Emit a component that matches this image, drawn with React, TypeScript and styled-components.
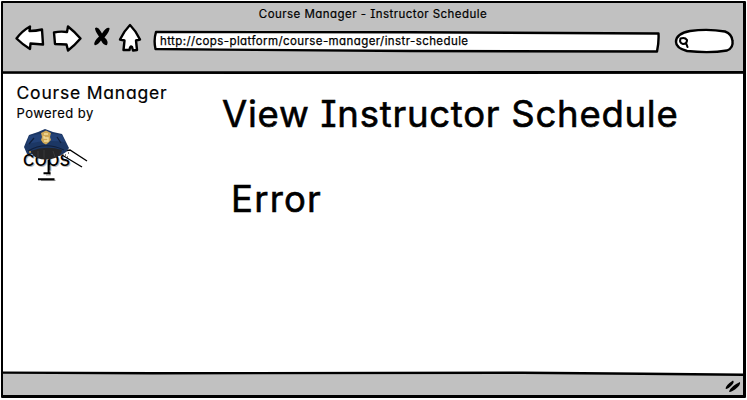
import React from 'react';
import styled, { createGlobalStyle } from 'styled-components';

const GlobalStyle = createGlobalStyle`
  * { box-sizing: border-box; }
  body { margin: 0; background: #fff; }
`;

const Browser = styled.div`
  display: flex;
  flex-direction: column;
  width: 747px;
  height: 400px;
  padding: 1px 1px 2px 1px;
  overflow: hidden;
  background: #fff;
  color: #000;
  font-family: Inter, sans-serif;
  font-feature-settings: 'cv08', 'cv11', 'calt' 0;
`;

const Frame = styled.div`
  flex: 1;
  display: flex;
  flex-direction: column;
  border: 3px solid #000;
  border-top-width: 2px;
  border-left-width: 2.5px;
  border-radius: 1px;
`;

const Header = styled.header`
  height: 68px;
  flex: none;
  background: #c1c1c1;
`;

const WindowTitle = styled.div`
  height: 21px;
  padding-top: 4px;
  text-align: center;
  font-size: 11.5px;
  line-height: 15px;
  white-space: nowrap;
  letter-spacing: 0.46px;
  -webkit-text-stroke: 0.2px #000;
`;

const Toolbar = styled.div`
  display: flex;
  align-items: flex-start;
  padding-left: 9px;
`;

const Nav = styled.svg`
  display: block;
  flex: none;
  width: 134px;
  height: 32px;
  margin-top: -2px;
`;

const Address = styled.div`
  position: relative;
  flex: none;
  width: 510px;
  height: 26px;
  margin: 4px 0 0 5px;
  padding: 6px 0 0 9px;
  font-size: 11.5px;
  line-height: 15px;
  white-space: nowrap;
`;

const Outline = styled.svg`
  position: absolute;
  inset: 0;
  width: 100%;
  height: 100%;
`;

const AddressText = styled.span`
  position: relative;
  letter-spacing: 0.41px;
  -webkit-text-stroke: 0.25px #000;
`;

const Search = styled.svg`
  display: block;
  flex: none;
  width: 62px;
  height: 28px;
  margin: 3px 0 0 12px;
`;

const Rule = styled.svg<{ $height: number }>`
  display: block;
  flex: none;
  width: 100%;
  height: ${(p) => p.$height}px;
`;

const Body = styled.main`
  flex: 1;
  min-height: 0;
  display: flex;
`;

const Sidebar = styled.aside`
  width: 206px;
  padding: 8px 0 0 13.5px;
  white-space: nowrap;
`;

const Brand = styled.div`
  font-size: 17.5px;
  line-height: 22px;
  letter-spacing: 0.8px;
  -webkit-text-stroke: 0.2px #000;
`;

const Powered = styled.div`
  font-size: 13px;
  line-height: 18px;
  letter-spacing: 0.45px;
  -webkit-text-stroke: 0.15px #000;
`;

const Logo = styled.svg`
  display: block;
  width: 80px;
  height: 62px;
  margin-top: 3px;
  margin-left: -1px;
`;

const Content = styled.section`
  flex: 1;
  padding: 18px 0 0 13px;
  white-space: nowrap;
`;

const Heading = styled.h1`
  margin: 0;
  font-size: 36.5px;
  line-height: 44px;
  font-weight: 400;
  letter-spacing: 0.75px;
  -webkit-text-stroke: 0.6px #000;
`;

const Message = styled(Heading)`
  margin: 41px 0 0 9px;
  letter-spacing: 1.2px;
`;

const Footer = styled.footer`
  height: 19px;
  flex: none;
  display: flex;
  justify-content: flex-end;
  background: #c1c1c1;
`;

const Grip = styled.svg`
  width: 22px;
  height: 18px;
`;

function CopsLogo() {
  return (
    <Logo viewBox="16 125 80 62">
      <g fontFamily="Inter, sans-serif" fontSize="21" fontWeight="400" letterSpacing="-0.3">
        <text x="23.7" y="167" fill="#bbb">cops</text>
        <text x="22.7" y="166" fill="#000">cops</text>
      </g>
      <path d="M50 165V175H46" stroke="#999" strokeWidth="1.2" fill="none" />
      <path d="M41 180.4h14.5" stroke="#999" strokeWidth="1.3" />
      <path d="M48.6 160V173.2M43.5 173.2h7M38 179.2h16.5" stroke="#000" strokeWidth="2" />
      <path d="M64 152L69 150L87 160L81 166L63 156Z" fill="#fff" />
      <path d="M64 151L70 150L87 161M62 155L82 167" stroke="#000" strokeWidth="1.4" fill="none" />
      <path d="M65 155h1M68 153h1M67 157h1" stroke="#000" />
      <path d="M24 147L26 142L29 135L38 132L45 129L53 132L62 134L66 142L69 148L66 152L60 156L34 154L27 154Z" fill="#1c3764" />
      <path d="M29 136Q45 132 62 135L65 142Q46 139 27 144Z" fill="#234277" />
      <path d="M29 144L34 138M61 143L57 137M28 151Q45 141 64 150" stroke="#101f3c" strokeWidth="1.2" fill="none" />
      <path d="M31 151Q46 145 62 150Q61 156 55 158Q46 161 37 158Q32 156 31 151Z" fill="#252527" />
      <path d="M38 151L38 157M44 150v8M53 151l2 6" stroke="#39393a" />
      <path d="M41 133L44 131.5L46 130.5L48 131.5L51 133L50 137L51 140L48 143L46 144.5L43 143L41 140L42 137Z" fill="#cfa958" />
      <path d="M44 134h4M44 136v2h4v3h-4" stroke="#f2dda0" strokeWidth="1.3" fill="none" />
      <path d="M30 151v2" stroke="#d5a43e" strokeWidth="1.5" />
    </Logo>
  );
}

export default function App() {
  return (
    <>
      <GlobalStyle />
      <Browser>
        <Frame>
          <Header>
            <WindowTitle>Course Manager - Instructor Schedule</WindowTitle>
            <Toolbar>
              <Nav viewBox="12 21 134 32">
                <g fill="#fff" stroke="#000" strokeWidth="2.4" strokeLinejoin="round">
                  <path d="M16.5 37.5Q22 30 30 25.5L29.5 30Q36 30 42 28.5L43 43.5L30.5 42.5L30 48Q22 43 16.5 37.5Z" />
                  <path d="M54 31.5Q60 30 67 31L68 25.5Q75 31 80.5 37.5Q75 44 68 49.5L66.5 43.5L55 43Z" />
                  <path d="M130 24Q136 30 140 38.5L136 39.5L137 49L133 49.5L132 46Q130 44.5 129.5 49L123.5 49L124.5 39.5L120 38.5Q124 30 130 24Z" />
                </g>
                <path d="M95 27Q98 25 100.5 30L102 32.5Q106 26 109.5 27Q110 30 104.5 36.5Q109 40 107 44Q104 45 101 39.5Q97 45 94.5 44Q93 41 99 35.5Q95 30 95 27Z" />
              </Nav>
              <Address>
                <Outline viewBox="151 28 510 26">
                  <path d="M156 32L410 32.2L658.5 33.5Q659 42 657 51.5L410 51L220 49.6L155.5 49Q153.5 40 156 32Z" fill="#fff" stroke="#000" strokeWidth="2.4" strokeLinejoin="round" />
                </Outline>
                <AddressText>http://cops-platform/course-manager/instr-schedule</AddressText>
              </Address>
              <Search viewBox="673 27 62 28">
                <path d="M690 31Q708 28.5 725 31.5Q732 34 732.5 41Q733.5 48 727 50.5Q710 53.5 687 51Q676 48 676 42Q676 33.5 690 31Z" fill="#fff" stroke="#000" strokeWidth="2.4" />
                <path d="M680.5 38.5Q685 37 687 40Q687 44 683 44Q679 43 680.5 38.5ZM686 43L687.5 47" fill="none" stroke="#000" strokeWidth="2.1" strokeLinecap="round" />
              </Search>
            </Toolbar>
          </Header>
          <Rule $height={3} viewBox="0 0 741 3" preserveAspectRatio="none">
            <path d="M0 0H741V3H0Z" fill="#c1c1c1" />
            <path d="M0 .3L741 0V2.7L400 3L0 2.8Z" />
          </Rule>
          <Body>
            <Sidebar>
              <Brand>Course Manager</Brand>
              <Powered>Powered by</Powered>
              <CopsLogo />
            </Sidebar>
            <Content>
              <Heading>View Instructor Schedule</Heading>
              <Message as="p">Error</Message>
            </Content>
          </Body>
          <Rule $height={5} viewBox="0 0 741 5" preserveAspectRatio="none">
            <path d="M0 2L250 2.6L520 2L741 4V5H0Z" fill="#c1c1c1" />
            <path d="M0 1.6L150 2.3L520 1.8L640 2.8L741 3.7" fill="none" stroke="#000" strokeWidth="2.4" />
          </Rule>
          <Footer>
            <Grip viewBox="721 377 22 18">
              <path d="M725.5 389.5Q726 386 733 381.5Q735 383 731 387Q727 391 725.5 389.5ZM729 392.5Q731 387 740 383Q741 386 735 390.5Q730 394 729 392.5Z" />
            </Grip>
          </Footer>
        </Frame>
      </Browser>
    </>
  );
}
